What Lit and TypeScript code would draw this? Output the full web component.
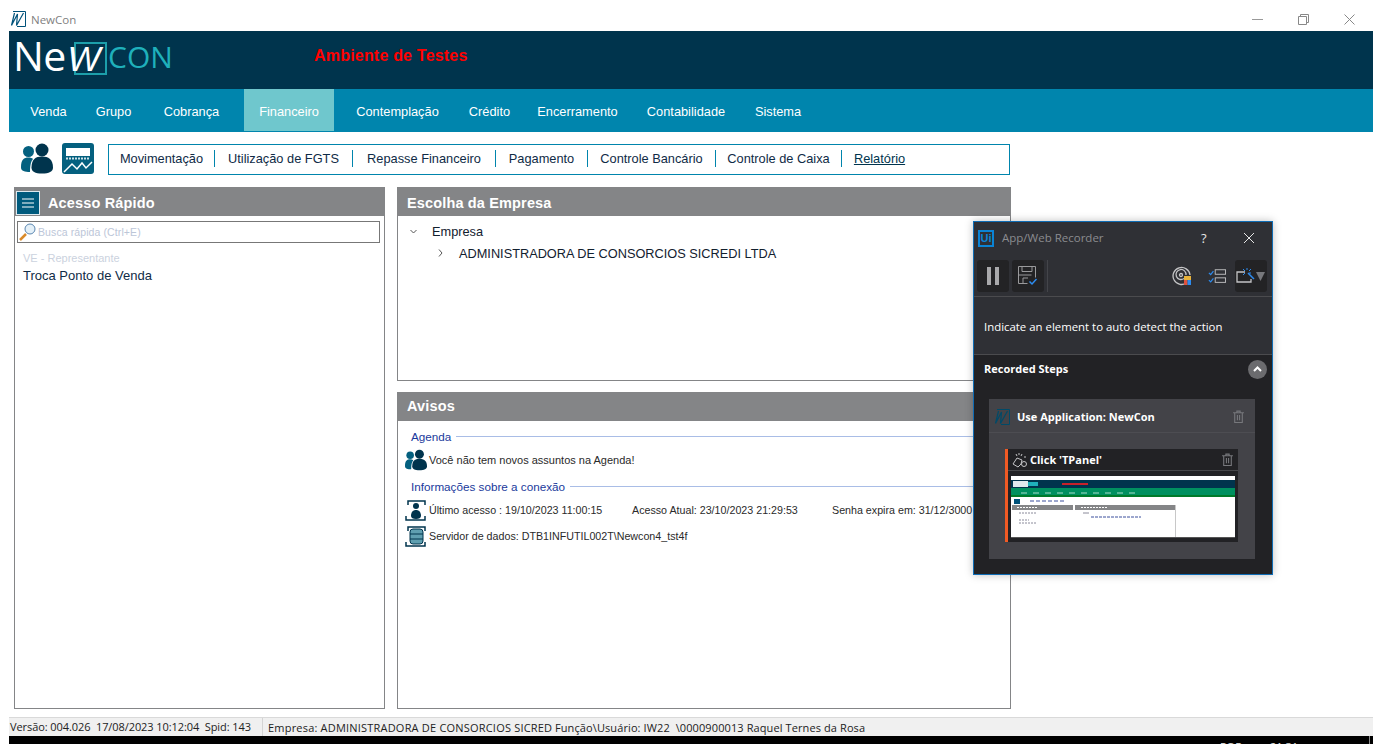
import { LitElement, html, css } from 'lit'
import { customElement } from 'lit/decorators.js'

const NAV = ['Venda', 'Grupo', 'Cobrança', 'Financeiro', 'Contemplação', 'Crédito', 'Encerramento', 'Contabilidade', 'Sistema']
const SUBMENU = ['Movimentação', 'Utilização de FGTS', 'Repasse Financeiro', 'Pagamento', 'Controle Bancário', 'Controle de Caixa']

const people = (w: number, h: number) => html`
  <svg width=${w} height=${h} viewBox="0 0 32 30">
    <circle cx="7.5" cy="8" r="5.5" fill="#04607f"/>
    <path d="M0 24c0-8 3-10 7.5-10 2 0 3.5.5 4.5 1.5-2 2.5-3 6-3 13-5 0-9-1-9-4.5z" fill="#04607f"/>
    <circle cx="21" cy="6.5" r="6.5" fill="#00344d"/>
    <path d="M10.5 24c0-8 4-11 10.5-11s11 3 11 11c0 4-4 6-11 6s-10.5-2-10.5-6z" fill="#00344d"/>
  </svg>`

const trash = (size: number, color: string) => html`
  <svg width=${size} height=${size} viewBox="0 0 12 12" fill="none" stroke=${color} stroke-width="1">
    <path d="M1 2.5h10M4.5 2.5V1h3v1.5M2.5 2.5v9h7v-9M5 4.500v5M7 4.500v5"/>
  </svg>`

const wMark = (size: number, color: string) => html`
  <svg width=${size} height=${size} viewBox="0 0 16 16" fill="none">
    <path d="M3 .5h12.500v15H7" stroke=${color}/>
    <path d="M4.500 2 1.500 14.500 7.500 3 6.500 14.500 13.500 2" stroke=${color} stroke-width="1.200"/>
  </svg>`

@customElement('app-root')
export class AppRoot extends LitElement {
  static styles = css`
    :host {
      display: block;
      position: relative;
      width: 1382px;
      height: 744px;
      overflow: hidden;
      background: #fff;
      font-family: "Liberation Sans", Arial, sans-serif;
      color: #0f2b46;
    }
    .titlebar {
      height: 31px;
      display: flex;
      align-items: center;
      padding: 7px 0 0 10px;
      box-sizing: border-box;
      font-family: "Open Sans", sans-serif;
      font-size: 11.5px;
      color: #7f7f7f;
    }
    .titlebar .name { margin-left: 5px; }
    .winctl { margin-left: auto; display: flex; margin-right: 27px; gap: 35px; align-items: center; }
    .app { margin: 0 9px; }
    .header { height: 58px; background: #00344d; display: flex; }
    .logo { width: 305px; display: flex; align-items: flex-start; padding: 0 0 0 4px; box-sizing: border-box; font-family: "Open Sans", sans-serif; }
    .logo .ne { font-size: 41px; font-weight: 400; color: #fff; line-height: 48px; letter-spacing: -0.5px; width: 52px; }
    .logo .wbox {
      width: 33px; height: 33px; margin: 11px 0 0 9px;
      box-sizing: border-box;
      border: 2px solid #1c9fab;
      display: flex; align-items: center; justify-content: center;
    }
    .logo .w { font-family: "Liberation Sans", sans-serif; font-style: italic; color: #fff; font-size: 35px; line-height: 31px; margin-left: -13px; }
    .logo .con { font-size: 30px; color: #1fb0bb; font-weight: 400; line-height: 48px; margin: 2px 0 0 1px; }
    .env { color: #f00; font-weight: 700; font-size: 16px; line-height: 50px; letter-spacing: 0.2px; }
    .nav {
      height: 43px;
      background: #0085ad;
      display: grid;
      grid-template-columns: 79px 51px 105px 90px 127px 57px 119px 98px 86px;
      color: #fff;
      font-size: 12.8px;
      padding-bottom: 1px;
      box-sizing: border-box;
    }
    .nav span { display: flex; align-items: center; justify-content: center; padding-top: 2px; }
    .nav .active { background: #6fc7cd; }
    .toolbar { height: 55px; display: flex; padding: 11px 0 0 12px; box-sizing: border-box; }
    .calc { margin-left: 9px; }
    .submenu {
      width: 902px; height: 31px; margin: 1px 0 0 14px;
      box-sizing: border-box;
      border: 1px solid #0085ad;
      display: grid;
      grid-template-columns: 106px 138px 143px 92px 128px 126px 75px;
      align-items: center;
      padding-bottom: 2px;
      font-size: 12.8px;
      color: #0f2b46;
    }
    .submenu span { height: 17px; line-height: 17px; text-align: center; border-right: 1px solid #0085ad; }
    .submenu u { color: #00344d; text-align: center; }
    .panels {
      margin-left: 5px;
      display: grid;
      grid-template-columns: 371px 614px;
      column-gap: 12px;
      height: 522px;
    }
    .stack { display: flex; flex-direction: column; gap: 11px; }
    .panel { border: 1px solid #848587; box-sizing: border-box; background: #fff; }
    .panel h2 {
      margin: 0; height: 28px; background: #848587; color: #fff;
      font-size: 14.5px; font-weight: 700; line-height: 31px;
      padding-left: 9px;
      letter-spacing: 0.15px;
    }
    .left { height: 522px; }
    .left h2 { display: flex; align-items: flex-start; padding-left: 1px; }
    .left h2 svg { margin: 3px 8px 0 0; }
    .search {
      margin: 5px 4px 0 2px; height: 22px; box-sizing: border-box;
      border: 1px solid #777;
      display: flex; align-items: center;
      font-size: 10.5px; color: #bcc6d8; letter-spacing: 0.1px;
    }
    .list { margin-top: 7px; padding-left: 8px; font-size: 13px; line-height: 17px; }
    .list .muted { color: #cbd2de; font-size: 11px; }
    .choose { height: 194px; }
    .tree { padding-top: 4px; font-size: 12.75px; color: #12202e; }
    .tree div { height: 22px; display: flex; align-items: center; }
    .tree svg { margin-left: 12px; margin-right: 15px; }
    .tree .sub svg { margin-left: 40px; margin-right: 16px; }
    .notices { height: 317px; }
    .notices h2 { line-height: 26px; }
    .legend {
      margin: 8px 5px 0 13px; height: 16px;
      box-sizing: border-box;
      padding-bottom: 2px;
      display: flex; align-items: center; gap: 5px;
      font-size: 11.7px; color: #1a3a9c;
    }
    .legend::after { content: ''; flex: 1; height: 1px; background: #a9bde6; }
    .row {
      margin: 5px 0 0 7px; height: 21px;
      display: flex; align-items: center;
      font-size: 10.7px; color: #2a2a2a;
    }
    .row span { margin-top: -1px; }
    .row svg { width: 22px; flex: none; margin-right: 2px; }
    .row .a { width: 203px; }
    .row .b { width: 200px; }
    .row.agenda { margin-top: 4px; height: 22px; font-size: 11px; }
    .row.agenda span { margin-top: 0; }
    .status {
      margin-top: 8px; height: 19px; box-sizing: border-box;
      background: #f0f0f0; border-top: 1px solid #d9d9d9;
      display: flex; align-items: center;
      font-family: "Open Sans", sans-serif; font-size: 11px; color: #222;
      white-space: pre;
      padding-left: 1px;
    }
    .status .s1 { width: 253px; border-right: 1px solid #d4d4d4; height: 18px; line-height: 18px; box-sizing: border-box; letter-spacing: -0.08px; }
    .status .s2 { width: 289px; padding-left: 5px; overflow: hidden; box-sizing: border-box; letter-spacing: 0.2px; }
    .status .s3 { margin-left: 3px; letter-spacing: 0.1px; }
    .taskbar {
      height: 8px; background: #000; overflow: hidden; color: #e8e8e8;
      font-family: "Open Sans", sans-serif; font-size: 11px; line-height: 15px;
      display: flex; padding: 3px 0 0 1211px; box-sizing: border-box; gap: 28px;
    }
    .taskbar i { width: 1px; height: 8px; margin: -3px 3px 0 auto; background: #8a8a8a; }
    .recorder {
      position: absolute; left: 973px; top: 221px; width: 300px; height: 354px;
      box-sizing: border-box;
      border: 1px solid #0f6cb4;
      background: #2f3035;
      box-shadow: 0 0 8px rgba(0,0,0,.25);
      font-family: "Open Sans", sans-serif;
      color: #fff;
      display: flex; flex-direction: column;
    }
    .rec-title { height: 32px; flex: none; display: flex; align-items: center; padding-left: 4px; font-size: 11.5px; color: #8b8c90; }
    .ui {
      width: 12px; height: 13px; border: 2px solid #0a84d6; color: #0a84d6;
      font: 700 11px/13px "Liberation Sans", sans-serif; text-align: center;
    }
    .rec-title .t { margin: -1px 0 0 8px; width: 199px; }
    .rec-title .q { width: 42px; color: #e6e6e6; font-size: 13px; }
    .rec-tools {
      height: 43px; flex: none; display: flex; padding: 6px 0 0 3px; gap: 3px; box-sizing: border-box;
      border-bottom: 1px solid #4b4b4e;
    }
    .rec-tools button {
      all: unset; width: 32px; height: 32px; background: #232325; border-radius: 3px;
      display: flex; align-items: center; justify-content: center;
    }
    .rec-tools .div { width: 1px; height: 32px; background: #44454a; }
    .rec-tools .icon { display: flex; align-items: center; height: 32px; }
    .rec-tools .first { margin-left: 121px; }
    .rec-tools .second { margin-left: 13px; }
    .rec-tools button.drop { margin-left: 6px; justify-content: flex-start; padding-left: 1px; width: 31px; }
    .rec-msg {
      height: 58px; flex: none; display: flex; align-items: center; padding: 2px 0 0 10px; font-size: 11.4px;
      box-sizing: border-box; border-bottom: 1px solid #4b4b4e;
    }
    .rec-steps { flex: 1; background: #222225; }
    .steps-head {
      height: 28px; display: flex; align-items: center; justify-content: space-between;
      padding: 0 5px 0 10px; font-size: 11px; font-weight: 700;
    }
    .steps-head .label { margin-top: -2px; }
    .collapse { width: 19px; height: 19px; border-radius: 50%; background: #6b6b6e; display: flex; align-items: center; justify-content: center; }
    .card { margin: 16px 17px 0 15px; height: 160px; background: #434348; }
    .card-head {
      height: 34px; box-sizing: border-box; border-bottom: 1px solid #4d4d52;
      display: flex; align-items: center; padding: 2px 10px 0 5px;
      font-size: 11px; font-weight: 700;
    }
    .card-head .label { margin-left: 7px; flex: 1; }
    .step {
      margin: 16px 17px 0 16px; height: 93px; background: #222225;
      border-left: 3px solid #f15a24;
    }
    .step-head {
      height: 22px; box-sizing: border-box; border-bottom: 1px solid #47474a;
      display: flex; align-items: center; padding: 0 4px;
      font-size: 11px; font-weight: 700;
    }
    .step-head .label { margin-left: 2px; flex: 1; }
    .thumb { display: block; margin: 5px 0 0 3px; }
  `

  render () {
    return html`
      <div class="titlebar">
        ${wMark(16, '#00527a')}
        <span class="name">NewCon</span>
        <div class="winctl">
          <svg width="11" height="11" viewBox="0 0 11 11"><path d="M0 5.5h11" stroke="#999"/></svg>
          <svg width="11" height="11" viewBox="0 0 11 11" fill="none" stroke="#888"><path d="M.5 2.5h8v8h-8zM2.500 2.5v-2h8v8h-2"/></svg>
          <svg width="11" height="11" viewBox="0 0 11 11" stroke="#888"><path d="M.5.5l10 10M10.500.5l-10 10"/></svg>
        </div>
      </div>
      <div class="app">
        <div class="header">
          <div class="logo">
            <span class="ne">Ne</span>
            <span class="wbox"><span class="w">W</span></span>
            <span class="con">CON</span>
          </div>
          <span class="env">Ambiente de Testes</span>
        </div>
        <div class="nav">
          ${NAV.map(n => html`<span class=${n === 'Financeiro' ? 'active' : ''}>${n}</span>`)}
        </div>
        <div class="toolbar">
          ${people(32, 31)}
          <svg class="calc" width="32" height="31" viewBox="0 0 32 31">
            <rect width="32" height="31" rx="3" fill="#04607f"/>
            <rect x="4" y="5" width="24" height="8" fill="#fff"/>
            <path d="M4 15.5h24" stroke="#cfe3ea" stroke-dasharray="2 1" stroke-width="2"/>
            <path d="M2 29l8-8 5 5 5-6 4 5 6-6" fill="none" stroke="#fff" stroke-width="1.5"/>
          </svg>
          <div class="submenu">
            ${SUBMENU.map(s => html`<span>${s}</span>`)}
            <u>Relatório</u>
          </div>
        </div>
        <div class="panels">
          <section class="panel left">
            <h2>
              <svg width="24" height="24" viewBox="0 0 24 24">
                <rect x=".5" y=".5" width="23" height="23" fill="#005a7d" stroke="#dfeaf0"/>
                <path d="M6 8h12M6 12h12M6 16h12" stroke="#fff"/>
              </svg>
              Acesso Rápido
            </h2>
            <div class="search">
              <svg width="20" height="20" viewBox="0 0 20 20" fill="none">
                <path d="M2 18l6-6" stroke="#d98a2b" stroke-width="2.5"/>
                <circle cx="12" cy="7" r="5" stroke="#5a86b0" fill="#e4f0f8"/>
              </svg>
              Busca rápida (Ctrl+E)
            </div>
            <div class="list">
              <div class="muted">VE - Representante</div>
              <div>Troca Ponto de Venda</div>
            </div>
          </section>
          <div class="stack">
            <section class="panel choose">
              <h2>Escolha da Empresa</h2>
              <div class="tree">
                <div>
                  <svg width="7" height="7" viewBox="0 0 7 7" fill="none" stroke="#555"><path d="M.5 2l3 3 3-3"/></svg>
                  Empresa
                </div>
                <div class="sub">
                  <svg width="5" height="8" viewBox="0 0 5 8" fill="none" stroke="#555"><path d="M1 .5l3 3.5-3 3.5"/></svg>
                  ADMINISTRADORA DE CONSORCIOS SICREDI LTDA
                </div>
              </div>
            </section>
            <section class="panel notices">
              <h2>Avisos</h2>
              <div class="legend">Agenda</div>
              <div class="row agenda">${people(22, 22)}<span>Você não tem novos assuntos na Agenda!</span></div>
              <div class="legend">Informações sobre a conexão</div>
              <div class="row">
                <svg height="21" viewBox="0 0 22 21" fill="none">
                  <path d="M3 5V1h17v4M1 16v4h19v-4" stroke="#00344d" stroke-width="1.5"/>
                  <circle cx="11" cy="6" r="3" fill="#00344d"/>
                  <path d="M6 16c0-4 2-6 5-6s5 2 5 6c0 2-2 3-5 3s-5-1-5-3z" fill="#00344d"/>
                </svg>
                <span class="a">Último acesso : 19/10/2023 11:00:15</span>
                <span class="b">Acesso Atual: 23/10/2023 21:29:53</span>
                <span>Senha expira em: 31/12/3000</span>
              </div>
              <div class="row">
                <svg height="21" viewBox="0 0 22 21" fill="none">
                  <path d="M3 5V1h17v4M1 16v4h19v-4" stroke="#00344d" stroke-width="1.5"/>
                  <rect x="5" y="3" width="13" height="15" rx="3" fill="#5f9fb0" stroke="#00344d"/>
                  <path d="M5 8h13M5 13h13" stroke="#00344d"/>
                </svg>
                <span>Servidor de dados: DTB1INFUTIL002T\\Newcon4_tst4f</span>
              </div>
            </section>
          </div>
        </div>
        <div class="status">
          <span class="s1">Versão: 004.026  17/08/2023 10:12:04  Spid: 143</span>
          <span class="s2">Empresa: ADMINISTRADORA DE CONSORCIOS SICREDI LTDA</span>
          <span class="s3">Função\\Usuário: IW22  \\0000900013 Raquel Ternes da Rosa</span>
        </div>
        <div class="taskbar"><span>POR</span><span>21:31</span><i></i></div>
      </div>
      ${this.renderRecorder()}
    `
  }

  renderRecorder () {
    return html`
      <aside class="recorder">
        <div class="rec-title">
          <span class="ui">Ui</span>
          <span class="t">App/Web Recorder</span>
          <span class="q">?</span>
          <svg width="12" height="12" viewBox="0 0 12 12" stroke="#e6e6e6"><path d="M1 1l10 10M11 1L1 11"/></svg>
        </div>
        <div class="rec-tools">
          <button>
            <svg width="12" height="18" viewBox="0 0 12 18" fill="#a9a9ab"><rect width="4" height="18"/><rect x="8" width="4" height="18"/></svg>
          </button>
          <button>
            <svg width="20" height="20" viewBox="0 0 20 20" fill="none" stroke="#9a9a9c">
              <path d="M.5 .5h17v11M.5 .5v17h9"/>
              <path d="M4 .5v5h10v-5M.5 9h13"/>
              <path d="M5 17v-5h5"/>
              <path d="M11.5 15.5l2.5 2.5 4.5-5" stroke="#2d8cf0" stroke-width="1.5"/>
            </svg>
          </button>
          <span class="div"></span>
          <span class="icon first">
            <svg width="20" height="20" viewBox="0 0 20 20" fill="none" stroke="#c4c4c6">
              <path d="M15 16.5A8.5 8.5 0 1 1 18 9" stroke-width="1.3"/>
              <path d="M12 12.5A5 5 0 1 1 14 9" stroke-width="1.3"/>
              <circle cx="9" cy="9" r="1.5" stroke-width="1.3"/>
              <rect x="12" y="10" width="7" height="4" fill="#e8b33c" stroke="none"/>
              <rect x="12" y="14" width="3.5" height="5" fill="#e0533d" stroke="none"/>
              <rect x="15.5" y="14" width="3.5" height="5" fill="#2d8cf0" stroke="none"/>
            </svg>
          </span>
          <span class="icon second">
            <svg width="18" height="15" viewBox="0 0 20 16" fill="none">
              <path d="M1 4l2 2 3-4M1 12l2 2 3-4" stroke="#2d8cf0" stroke-width="1.3"/>
              <rect x="8" y=".5" width="11.5" height="5" stroke="#c4c4c6"/>
              <rect x="8" y="9.5" width="11.5" height="5" stroke="#c4c4c6"/>
            </svg>
          </span>
          <button class="drop">
            <svg width="30" height="18" viewBox="0 0 30 18" fill="none">
              <path d="M9 5H1v10h14v-3" stroke="#c4c4c6" stroke-width="1.3"/>
              <path d="M7 2l2 2M11 1v2M15 2l-2 2M7 8l2-2M15 6h-2" stroke="#2d8cf0"/>
              <path d="M12 6l6 6" stroke="#2d8cf0" stroke-width="1.5"/>
              <path d="M20 5h9l-4.5 9z" fill="#77787c"/>
            </svg>
          </button>
        </div>
        <div class="rec-msg">Indicate an element to auto detect the action</div>
        <div class="rec-steps">
          <div class="steps-head">
            <span class="label">Recorded Steps</span>
            <span class="collapse">
              <svg width="9" height="6" viewBox="0 0 9 6" fill="none" stroke="#fff" stroke-width="2"><path d="M1 5l3.5-3.5L8 5"/></svg>
            </span>
          </div>
          <div class="card">
            <div class="card-head">
              ${wMark(16, '#004a68')}
              <span class="label">Use Application: NewCon</span>
              ${trash(13, '#77787c')}
            </div>
            <div class="step">
              <div class="step-head">
                <svg width="16" height="16" viewBox="0 0 16 16" fill="none" stroke="#c4c4c6">
                  <path d="M1 12l4-6 5 2-1 4-3 3z"/>
                  <path d="M7 1v2M10 2l-1 2M12 5h2M4 2l1 2"/>
                  <circle cx="12" cy="12" r="2.5"/>
                </svg>
                <span class="label">Click 'TPanel'</span>
                ${trash(13, '#77787c')}
              </div>
              <svg class="thumb" width="224" height="62" viewBox="0 0 224 62">
                <rect width="224" height="62" fill="#fff"/>
                <rect y="4" width="224" height="8" fill="#00344d"/>
                <rect x="2" y="5" width="15" height="6" fill="#dfe9ee"/>
                <rect x="17" y="6" width="10" height="4" fill="#1fb0bb"/>
                <rect x="51" y="7" width="26" height="2" fill="#c8202a"/>
                <rect y="12" width="224" height="8" fill="#009060"/>
                <rect y="19" width="224" height="2" fill="#007a2a"/>
                <path d="M10 17h120" stroke="#a8dcc8" stroke-dasharray="6 6"/>
                <rect x="3" y="23" width="6" height="5" fill="#00527a"/>
                <path d="M19 25h36" stroke="#3b4f9c" stroke-dasharray="4 2"/>
                <rect x="1" y="29" width="61" height="5" fill="#848587"/>
                <rect x="64" y="29" width="100" height="5" fill="#848587"/>
                <path d="M6 31.5h20M70 31.5h26" stroke="#fff" stroke-dasharray="2 1"/>
                <rect x="164" y="29" width="1" height="32" fill="#c8c8c8"/>
                <path d="M8 37h18M8 44h10M8 47h18" stroke="#8a8a9a" stroke-dasharray="2 1"/>
                <path d="M72 37h6" stroke="#8a8a9a"/>
                <path d="M80 41h50" stroke="#3b4f9c" stroke-dasharray="3 1"/>
                <rect y="61" width="224" height="1" fill="#555"/>
              </svg>
            </div>
          </div>
        </div>
      </aside>
    `
  }
}
